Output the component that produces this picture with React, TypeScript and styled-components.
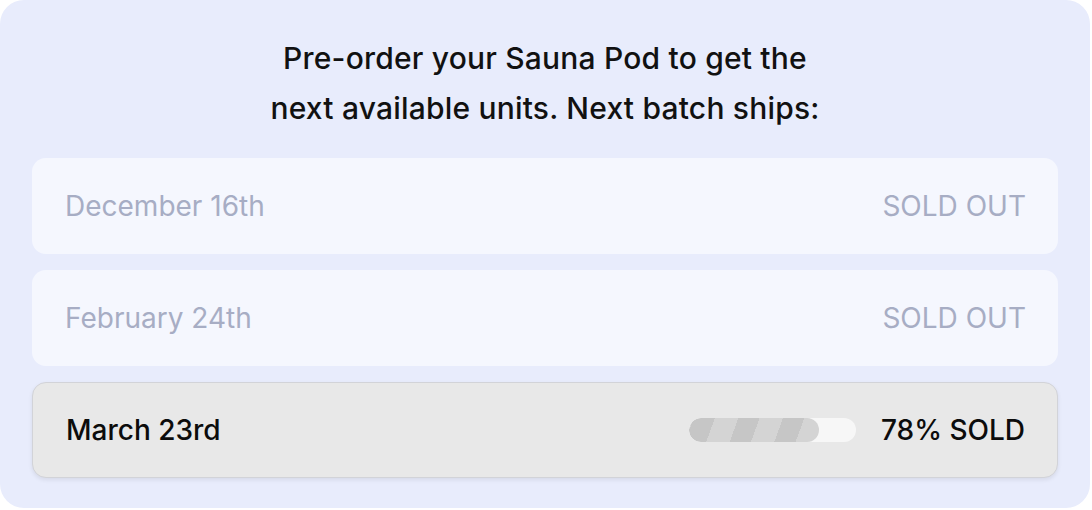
import React from 'react';
import styled, { createGlobalStyle, css } from 'styled-components';

const GlobalStyle = createGlobalStyle`
    html, body {
        margin: 0;
        padding: 0;
        background: #ffffff;
    }
    body {
        font-family: Inter, "Noto Sans", "Liberation Sans", sans-serif;
        -webkit-font-smoothing: antialiased;
    }
`;

const Card = styled.div`
    box-sizing: border-box;
    width: 1090px;
    height: 508px;
    background: #e8ecfc;
    border-radius: 24px;
    padding: 33px 32px 30px;
    display: flex;
    flex-direction: column;
`;

const Heading = styled.h2`
    margin: 0 0 25px;
    text-align: center;
    font-size: 30px;
    font-weight: 500;
    line-height: 50px;
    letter-spacing: 0.2px;
    color: #111111;
`;

const List = styled.div`
    display: flex;
    flex-direction: column;
    gap: 16px;
`;

const Row = styled.div<{ $active: boolean }>`
    box-sizing: border-box;
    height: 96px;
    border-radius: 14px;
    padding: 0 32px 0 33px;
    display: flex;
    align-items: center;
    justify-content: space-between;
    font-size: 28px;
    ${({ $active }) =>
        $active
            ? css`
                  background: #e8e8e8;
                  border: 1px solid #d2d3d8;
                  box-shadow: 0 2px 4px rgba(0, 0, 0, 0.08);
                  color: #0c0c0c;
                  font-weight: 500;
              `
            : css`
                  background: #f5f7fe;
                  color: #a7adc4;
                  font-weight: 400;
              `}
`;

const Status = styled.div`
    display: flex;
    align-items: center;
    gap: 25px;
`;

const Track = styled.div`
    width: 167px;
    height: 24px;
    border-radius: 12px;
    background: #f7f7f7;
    overflow: hidden;
`;

const Fill = styled.div`
    height: 100%;
    border-radius: 12px;
    background-color: #d4d4d4;
    background-image: repeating-linear-gradient(
        -70deg,
        #d4d4d4 0 22px,
        #c6c6c6 22px 42px
    );
`;

const batches = [
    { date: 'December 16th', sold: 100 },
    { date: 'February 24th', sold: 100 },
    { date: 'March 23rd', sold: 78 },
];

export default function App() {
    return (
        <>
            <GlobalStyle />
            <Card>
                <Heading>
                    Pre-order your Sauna Pod to get the
                    <br />
                    next available units. Next batch ships:
                </Heading>
                <List>
                    {batches.map((b) => {
                        const active = b.sold < 100;
                        return (
                            <Row key={b.date} $active={active}>
                                <span>{b.date}</span>
                                {active ? (
                                    <Status>
                                        <Track>
                                            <Fill style={{ width: `${b.sold}%` }} />
                                        </Track>
                                        <span>{b.sold}% SOLD</span>
                                    </Status>
                                ) : (
                                    <span>SOLD OUT</span>
                                )}
                            </Row>
                        );
                    })}
                </List>
            </Card>
        </>
    );
}
